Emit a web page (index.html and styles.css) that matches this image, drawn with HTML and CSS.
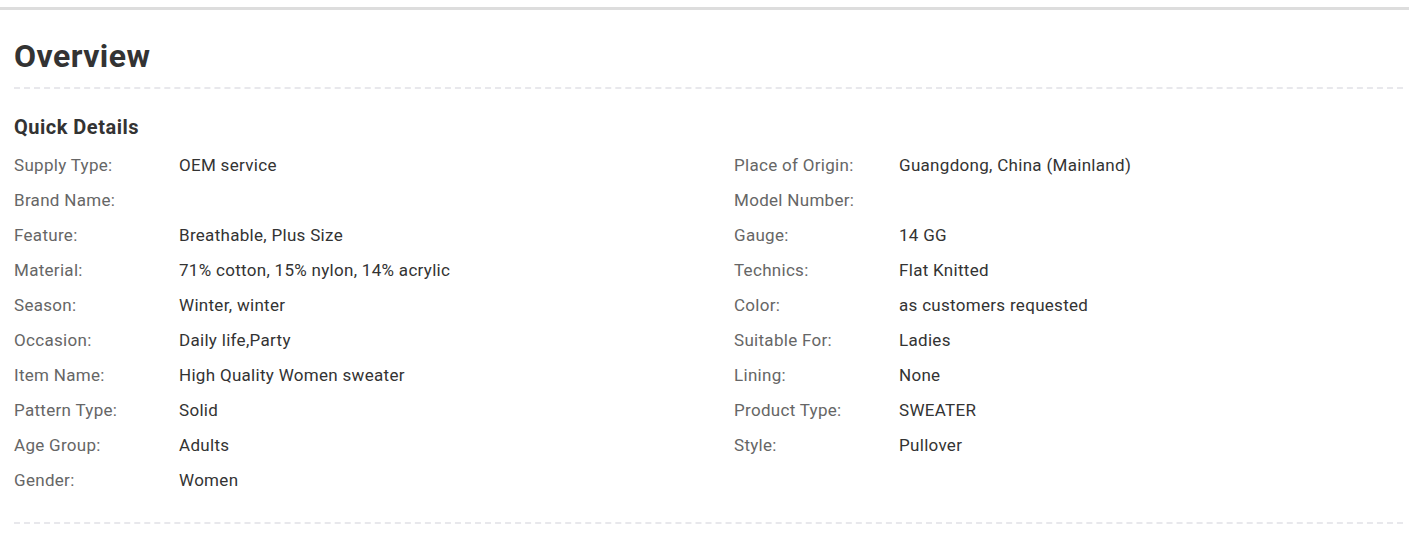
FILE: index.html
```html
<!DOCTYPE html>
<html>
<head>
<meta charset="utf-8">
<link rel="stylesheet" href="styles.css">
</head>
<body>
<div class="overview">
  <h2 class="title">Overview</h2>
  <div class="details">
    <h3 class="subtitle">Quick Details</h3>
    <div class="grid">
      <div class="item"><span class="label">Supply Type:</span><span class="value">OEM service</span></div>
      <div class="item"><span class="label">Place of Origin:</span><span class="value">Guangdong, China (Mainland)</span></div>
      <div class="item"><span class="label">Brand Name:</span><span class="value"></span></div>
      <div class="item"><span class="label">Model Number:</span><span class="value"></span></div>
      <div class="item"><span class="label">Feature:</span><span class="value">Breathable, Plus Size</span></div>
      <div class="item"><span class="label">Gauge:</span><span class="value">14 GG</span></div>
      <div class="item"><span class="label">Material:</span><span class="value">71% cotton, 15% nylon, 14% acrylic</span></div>
      <div class="item"><span class="label">Technics:</span><span class="value">Flat Knitted</span></div>
      <div class="item"><span class="label">Season:</span><span class="value">Winter, winter</span></div>
      <div class="item"><span class="label">Color:</span><span class="value">as customers requested</span></div>
      <div class="item"><span class="label">Occasion:</span><span class="value">Daily life,Party</span></div>
      <div class="item"><span class="label">Suitable For:</span><span class="value">Ladies</span></div>
      <div class="item"><span class="label">Item Name:</span><span class="value">High Quality Women sweater</span></div>
      <div class="item"><span class="label">Lining:</span><span class="value">None</span></div>
      <div class="item"><span class="label">Pattern Type:</span><span class="value">Solid</span></div>
      <div class="item"><span class="label">Product Type:</span><span class="value">SWEATER</span></div>
      <div class="item"><span class="label">Age Group:</span><span class="value">Adults</span></div>
      <div class="item"><span class="label">Style:</span><span class="value">Pullover</span></div>
      <div class="item"><span class="label">Gender:</span><span class="value">Women</span></div>
    </div>
  </div>
</div>
</body>
</html>
```

FILE: styles.css
```css
html, body {
  margin: 0;
  padding: 0;
  background: #fff;
}
body {
  font-family: Roboto, "Liberation Sans", Arial, sans-serif;
  color: #333;
}
.overview {
  margin-top: 7px;
  border-top: 3px solid #ddd;
  padding: 0 6px 0 14px;
}
.title {
  margin: 0;
  font-size: 32px;
  font-weight: 700;
  letter-spacing: 0.45px;
  line-height: 36px;
  padding-top: 28px;
  padding-bottom: 13px;
  color: #333;
  border-bottom: 2px dashed #e8e8ec;
}
.details {
  padding-top: 24px;
  padding-bottom: 24px;
  border-bottom: 2px dashed #e8e8ec;
}
.subtitle {
  margin: 0 0 7px;
  font-size: 20px;
  font-weight: 700;
  letter-spacing: 0.5px;
  line-height: 28px;
  color: #333;
}
.grid {
  display: grid;
  grid-template-columns: 720px 1fr;
}
.item {
  display: flex;
  font-size: 17px;
  letter-spacing: 0.3px;
  line-height: 35px;
  height: 35px;
}
.label {
  width: 165px;
  flex: none;
  color: #666;
}
.value {
  color: #333;
}
```
